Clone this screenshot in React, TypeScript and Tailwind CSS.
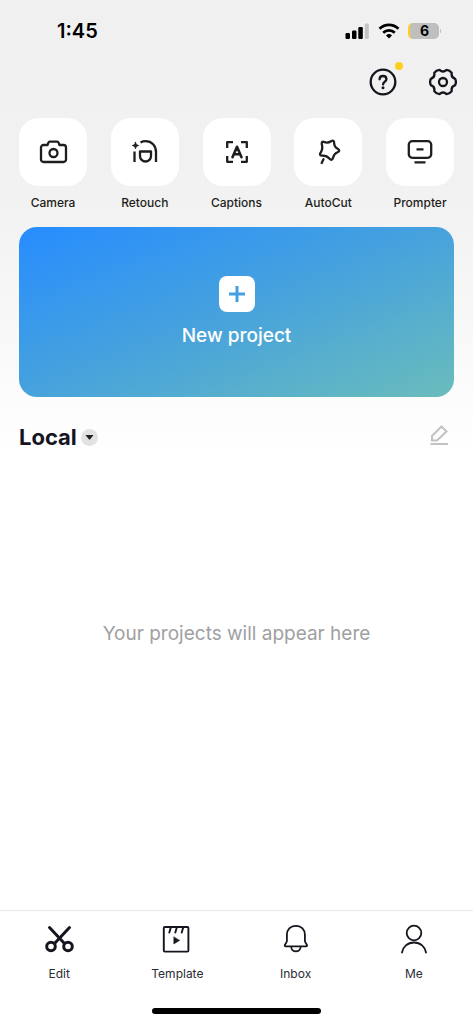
import type { ReactNode } from "react";

function Icon({ size, stroke = 2.3, children }: { size: number; stroke?: number; children: ReactNode }) {
  return (
    <svg
      width={size}
      height={size}
      viewBox={`0 0 ${size} ${size}`}
      fill="none"
      stroke="currentColor"
      strokeWidth={stroke}
      strokeLinecap="round"
      strokeLinejoin="round"
      aria-hidden="true"
    >
      {children}
    </svg>
  );
}

const tools = [
  {
    label: "Camera",
    icon: (
      <Icon size={32}>
        <path d="M6.5 9h4l.9-2.400a1.500 1.500 0 0 1 1.400-.9h7.400a1.500 1.500 0 0 1 1.400.9l.9 2.400h4a2.500 2.500 0 0 1 2.500 2.500v12a2.500 2.500 0 0 1-2.500 2.500h-20a2.500 2.500 0 0 1-2.500-2.500v-12a2.500 2.500 0 0 1 2.500-2.500z" />
        <circle cx="16.500" cy="17" r="4" />
      </Icon>
    ),
  },
  {
    label: "Retouch",
    icon: (
      <Icon size={32}>
        <path d="M5.500 15.500V26M11.500 6.500c1.800-1 3.300-1.300 5-1.300 6.300 0 10.500 4.400 10.500 10.800v10M11 15.500h11v4.500a5.500 5.500 0 0 1-11 0z" strokeLinecap="butt" />
        <path d="M6.500 6.300l.9 2.300 2.300.9-2.300.9-.9 2.300-.9-2.300-2.300-.9 2.300-.9z" fill="currentColor" strokeWidth="0.800" />
      </Icon>
    ),
  },
  {
    label: "Captions",
    icon: (
      <Icon size={32}>
        <path d="M6.200 12V6.200H12M20 6.200h5.800V12M25.800 20v5.800H20M12 25.800H6.200V20" strokeLinecap="butt" />
        <path d="M11.500 21.200L16 10.800l4.500 10.400M13 18.200h6" strokeWidth="2.600" />
      </Icon>
    ),
  },
  {
    label: "AutoCut",
    icon: (
      <Icon size={32}>
        <path d="M9.800 7.200C9.700 6 10.500 5.400 11.600 5.800c2.600 1.300 5 1.100 7.500-.5 1.700-1 3-.7 3 1.100 0 2.800 1 4.800 3.600 6.400 2.100 1.300 2 2.600-.2 3.500-2.400 1-3.800 2.600-4.500 5.500-.6 2.300-1.900 2.600-3.400.9-1.900-2.200-4-3.200-7-3.100-2.600.1-3.300-1.100-1.900-3.100 1.800-2.700 2-5.300 1.100-8.300zM11.500 23.300L9.700 27" />
      </Icon>
    ),
  },
  {
    label: "Prompter",
    icon: (
      <Icon size={32}>
        <rect x="4.800" y="5.200" width="22.400" height="16.600" rx="3.500" />
        <path d="M12.500 13.300h7M10.500 26.300h11" strokeLinecap="butt" />
      </Icon>
    ),
  },
];

const tabs = [
  {
    label: "Edit",
    icon: (
      <Icon size={32} stroke={3}>
        <path d="M6.500 4.500L21 20M26.500 4.500L12 20" />
        <circle cx="8" cy="23.500" r="4.300" />
        <circle cx="25" cy="23.500" r="4.300" />
      </Icon>
    ),
  },
  {
    label: "Template",
    icon: (
      <Icon size={32} stroke={1.9}>
        <rect x="2.800" y="4" width="24.600" height="24.600" rx="1" />
        <path d="M9.800 4.500L8.300 9.500M15.800 4.500L14.300 9.500M22.200 4.500L20.700 9.500" />
        <path d="M12.800 14v7l5.700-3.500z" fill="currentColor" strokeWidth="0.500" />
      </Icon>
    ),
  },
  {
    label: "Inbox",
    icon: (
      <Icon size={32} stroke={1.8}>
        <path d="M15.900 2.800c-5.600 0-9 4-9 9v6.300c0 1.500-2.200 3.300-2.200 4.500 0 .5.300.7.800.7h20.800c.5 0 .8-.2.800-.7 0-1.200-2.200-3-2.200-4.500v-6.300c0-5-3.400-9-9-9zM11.200 23.700a4.700 4.700 0 0 0 9.400 0" />
      </Icon>
    ),
  },
  {
    label: "Me",
    icon: (
      <Icon size={32} stroke={1.8}>
        <circle cx="16" cy="10" r="7.300" />
        <path d="M4 29.500c.8-5.500 5.600-10 12-10s11.200 4.500 12 10" />
      </Icon>
    ),
  },
];

function StatusBar() {
  return (
    <div className="flex h-[62px] items-center justify-between pr-8 pl-[57px] text-black">
      <span className="text-xl font-semibold">1:45</span>
      <div className="flex items-center gap-2">
        <svg width="25" height="16" viewBox="0 0 25 16" fill="currentColor" aria-label="Signal">
          <rect x="0.500" y="10" width="4.500" height="6" rx="1.200" />
          <rect x="7" y="7.500" width="4.500" height="8.500" rx="1.200" />
          <rect x="13.300" y="4" width="4.500" height="12" rx="1.200" />
          <rect x="19.800" y="0.500" width="4" height="15.500" rx="1.200" fill="#c4c4c4" />
        </svg>
        <svg width="22" height="16" viewBox="0 0 22 16" fill="none" stroke="currentColor" strokeWidth="2.700" aria-label="Wi-Fi">
          <path d="M1.500 5.800a13.500 13.500 0 0 1 19 0M5.200 9.700a8.200 8.200 0 0 1 11.600 0" />
          <path d="M11 15.500l-3-3a4.300 4.300 0 0 1 6 0z" fill="currentColor" stroke="none" />
        </svg>
        <div className="flex items-center gap-px">
          <div className="flex h-4 w-[31px] items-center justify-center overflow-hidden rounded-[5px] border-l-2 border-[#ffce1f] bg-[#bfbfbf] text-sm font-bold">
            6
          </div>
          <div className="h-1 w-px rounded-r bg-[#bfbfbf]" />
        </div>
      </div>
    </div>
  );
}

export default function App() {
  return (
    <div className="flex min-h-screen flex-col bg-white bg-linear-to-b from-[#f0f0f0] from-0% via-[#f2f2f2] via-20% to-white to-45% font-['Inter',sans-serif] text-[#15151f]">
      <StatusBar />
      <header className="flex h-10 items-center justify-end gap-8 pr-4">
        <button type="button" aria-label="Help" className="relative">
          <Icon size={28}>
            <circle cx="14" cy="14" r="12.300" />
            <path d="M10.600 11.300c0-2 1.500-3.300 3.400-3.300s3.400 1.300 3.400 3.200c0 2.300-3.300 2.600-3.300 5.200" />
            <circle cx="14" cy="19.800" r="1.500" fill="currentColor" stroke="none" />
          </Icon>
          <span className="absolute -top-1.5 -right-1.5 size-2 rounded-full bg-[#ffce1f]" />
        </button>
        <button type="button" aria-label="Settings">
          <Icon size={28}>
            <path d="M26.200 17.050Q21.800 18.500 22.750 23.060Q20.800 25.800 17.470 26.100Q14 23 10.530 26.100Q7.200 25.800 5.250 23.060Q6.200 18.500 1.800 17.050Q.4 14 1.800 10.950Q6.200 9.500 5.250 4.940Q7.200 2.200 10.530 1.900Q14 5 17.470 1.900Q20.800 2.200 22.750 4.940Q21.800 9.500 26.200 10.950Q27.600 14 26.200 17.050z" />
            <circle cx="14" cy="14" r="4" />
          </Icon>
        </button>
      </header>
      <main className="flex grow flex-col px-[19px] pt-4">
        <div className="flex justify-between">
          {tools.map((tool) => (
            <button key={tool.label} type="button" className="flex w-[68px] flex-col items-center gap-2 text-[#1e1e20]">
              <span className="flex size-[68px] items-center justify-center rounded-[20px] bg-white">{tool.icon}</span>
              <span className="text-xs leading-[18px] font-medium whitespace-nowrap">{tool.label}</span>
            </button>
          ))}
        </div>
        <button
          type="button"
          className="mt-[15px] flex h-[170px] flex-col items-center justify-center gap-2 rounded-[18px] bg-linear-to-br from-[#268cff] via-[#47a2dc] to-[#6abcbb] pt-1 text-white"
        >
          <span className="flex size-9 items-center justify-center rounded-lg bg-white text-[#429fe2]">
            <Icon size={20} stroke={3}>
              <path d="M10 2v16M2 10h16" strokeLinecap="butt" />
            </Icon>
          </span>
          <span className="text-[19px] leading-8 font-medium">New project</span>
        </button>
        <div className="mt-6 flex h-8 items-center justify-between pr-1">
          <button type="button" className="flex items-center gap-1">
            <span className="text-[22px] font-bold">Local</span>
            <span className="flex size-[17px] items-center justify-center rounded-full bg-[#e2e2e2]">
              <svg width="9" height="5" viewBox="0 0 9 5" fill="#222" aria-hidden="true">
                <path d="M.5 0h8L5 4.500H4z" />
              </svg>
            </span>
          </button>
          <button type="button" aria-label="Edit projects" className="text-[#c2c2c2]">
            <Icon size={24} stroke={2}>
              <path d="M6 15.500v-4.500L15.500 1.500L20.500 6.500L11 15.500zM4.500 19h17.500" strokeLinecap="butt" strokeLinejoin="miter" />
            </Icon>
          </button>
        </div>
        <p className="mt-[167px] text-center text-[19px] leading-7 text-[#a0a0a2]">Your projects will appear here</p>
      </main>
      <nav className="border-t border-[#e8e8e8] bg-white pt-3 pb-2.5">
        <div className="grid grid-cols-4">
          {tabs.map((tab) => (
            <a key={tab.label} href="#" className="flex flex-col items-center gap-2.5">
              {tab.icon}
              <span className="text-xs leading-[18px] text-[#2c2c34]">{tab.label}</span>
            </a>
          ))}
        </div>
        <div className="mx-auto mt-[25px] h-1.5 w-[169px] rounded-full bg-black" />
      </nav>
    </div>
  );
}
